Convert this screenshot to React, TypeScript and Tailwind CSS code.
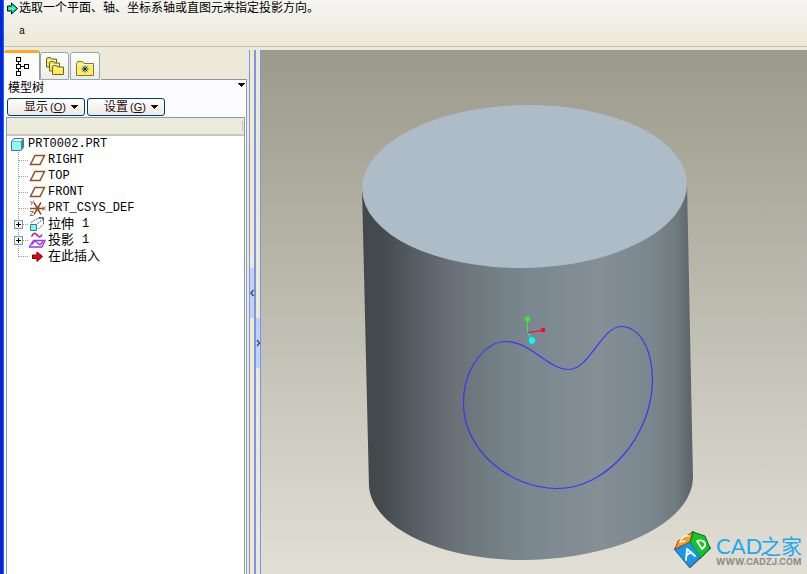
import type { ReactNode } from 'react';

type Kind = 'plane' | 'csys' | 'extrude' | 'project' | 'insert';

const ITEMS: { kind: Kind; name: string; num?: string; expandable?: boolean }[] = [
  { kind: 'plane', name: 'RIGHT' },
  { kind: 'plane', name: 'TOP' },
  { kind: 'plane', name: 'FRONT' },
  { kind: 'csys', name: 'PRT_CSYS_DEF' },
  { kind: 'extrude', name: '拉伸', num: '1', expandable: true },
  { kind: 'project', name: '投影', num: '1', expandable: true },
  { kind: 'insert', name: '在此插入' },
];

const LATIN = "font-['Liberation_Mono','Noto_Sans_CJK_SC',monospace] text-[12px]";
const CJK = "font-['Liberation_Sans','Noto_Sans_CJK_SC',sans-serif] text-[13px]";

export default function App() {
  return (
    <div className="flex min-h-screen flex-col border-l-[3px] border-[#0426d4] bg-[#ece9d8] text-black font-['Liberation_Sans','Noto_Sans_CJK_SC',sans-serif]">
      <div className="flex flex-1 flex-col border-l border-[#1a6af0]">
        <MessageBar />
        <div className="flex flex-1 pt-[3px]">
          <Navigator />
          <Splitter />
          <Viewport />
        </div>
      </div>
    </div>
  );
}

function MessageBar() {
  return (
    <header className="h-[47px] border-b border-[#c5c2b2] bg-linear-to-b from-[#f5f5f2] to-[#ebe8d8] pl-[3px]">
      <div className="flex h-4 items-center">
        <svg className="h-[13px] w-3 shrink-0" viewBox="0 0 12 13">
          <path d="M.5 4h4V1L10.500 6.500 4.500 12V9h-4z" fill="#12e88f" stroke="#000" />
          <path d="M2 6.500h6" stroke="#3ff4f4" strokeWidth="2" />
        </svg>
        <p className="whitespace-nowrap text-[12px] leading-4">选取一个平面、轴、坐标系轴或直图元来指定投影方向。</p>
      </div>
      <p className="mt-2 pl-3 text-[10px] leading-4 font-['Liberation_Mono',monospace]">a</p>
    </header>
  );
}

function Navigator() {
  return (
    <aside className="flex w-[245px] shrink-0 flex-col">
      <div className="mr-[2px] flex h-[30px] items-end" role="tablist">
        <Tab label="模型树" active>
          <svg className="mb-px h-5 w-4" viewBox="0 0 16 20" fill="none" stroke="#000" shapeRendering="crispEdges">
            <path d="M2.500 1.500h4v4h-4zM2.500 8.500h4v4h-4zM2.500 15.500h4v4h-4zM10.500 8.500h4v4h-4z" strokeWidth="1.200" />
            <path d="M4.500 6v2M4.500 13v2M7 10.500h3" />
          </svg>
        </Tab>
        <Tab label="文件夹浏览器">
          <svg className="h-5 w-5" viewBox="0 0 20 20" stroke="#6b6234">
            <path d="M1.500 11V3l1-1.500h3l1 1.500h5v8z" fill="#f2e15c" />
            <path d="M4.500 15V7l1-1.500h3l1 1.500h5v8z" fill="#f6e65c" />
            <path d="M7.500 18.500V11l1-1.500h3l1 1.500h6v7.500z" fill="#ffed45" />
            <path d="M2.500 4.500h8M5.500 8.500h8M8.500 12.500h9" stroke="#fffac0" />
          </svg>
        </Tab>
        <Tab label="收藏夹">
          <svg className="mt-1 h-4 w-[18px]" viewBox="0 0 18 16">
            <path d="M.5 15.500v-12l1-2h5l1.500 2h9.500v12z" fill="#ffed55" stroke="#77765b" />
            <path d="M1.500 4.500h15" stroke="#fffbd0" />
            <path d="M9 5.500v7M5.500 9h7M6.500 6.500l5 5M11.500 6.500l-5 5" stroke="#082e9c" />
          </svg>
        </Tab>
        <div className="h-px flex-1 bg-[#8b9b9c]" />
      </div>

      <div className="mr-[2px] flex flex-1 flex-col border-r border-[#919b9c] bg-[#fcfcfe] pl-[2px] pr-px">
        <div className="flex h-[18px] items-start justify-between pl-[2px]">
          <h1 className="text-[12px] leading-4">模型树</h1>
          <button aria-label="导航器选项" className="mt-[3px] flex">
            <DownArrow />
          </button>
        </div>
        <div className="flex gap-[2px] pl-px">
          <MenuButton text="显示" hotkey="O" />
          <MenuButton text="设置" hotkey="G" />
        </div>
        <Tree />
      </div>
    </aside>
  );
}

function Tab({ label, active, children }: { label: string; active?: boolean; children: ReactNode }) {
  return (
    <button
      role="tab"
      aria-label={label}
      aria-selected={!!active}
      className={
        active
          ? 'flex h-[30px] w-[36px] items-center justify-center rounded-t-[3px] border-t-[3px] border-r border-t-[#fba92d] border-r-[#919b9c] bg-[#fcfcfe]'
          : 'mr-px flex h-[28px] w-[29px] items-center justify-center rounded-t-[3px] border border-[#91a7b4] bg-linear-to-b from-white to-[#ecebe6] last-of-type:w-[30px]'
      }
    >
      {children}
    </button>
  );
}

function MenuButton({ text, hotkey }: { text: string; hotkey: string }) {
  return (
    <button className="flex h-[18px] w-[78px] items-center justify-end rounded-[3px] border border-[#003c74] bg-linear-to-b from-white to-[#eceae2] pr-[6px] text-[12px] text-[#2a0808]">
      <span className="leading-4">{text}</span>
      <span className="ml-[2px] mr-[5px] text-[11px] leading-4">
        (<u>{hotkey}</u>)
      </span>
      <DownArrow />
    </button>
  );
}

function DownArrow() {
  return (
    <svg className="h-1 w-[7px]" viewBox="0 0 7 4" fill="#2a0808" shapeRendering="crispEdges">
      <path d="M0 0h7L3.500 4z" />
    </svg>
  );
}

function Tree() {
  return (
    <div className="mt-px flex flex-1 flex-col border border-b-0 border-[#7f9db9] bg-white">
      <div className="flex h-[18px] justify-end border-b-2 border-[#cbc7b8] bg-[#ebeadb] py-[3px] pr-px">
        <span className="w-px bg-[#c5c2b2]" />
      </div>
      <ul role="tree">
        <li className="flex h-4 items-center pl-1" role="treeitem">
          <svg className="mr-1 h-[13px] w-[13px]" viewBox="0 0 13 13">
            <path d="M.5 3.500 3 .5h9.500v9L10 12.500H.5z" fill="#3a8f90" stroke="#5a7478" />
            <path d="M1 3.500h9v8.500H1z" fill="#8ef7f7" />
            <path d="M1.500 3 3.500 1H12l-2 2z" fill="#d5ffff" />
          </svg>
          <span className={`${LATIN} leading-4`}>PRT0002.PRT</span>
        </li>
        {ITEMS.map((item, i) => (
          <li key={item.name} className="flex h-4 items-center pl-[6px]" role="treeitem">
            <Branch expandable={item.expandable} last={i === ITEMS.length - 1} />
            <ItemIcon kind={item.kind} />
            <span className={`${/^[A-Z]/.test(item.name) ? LATIN : CJK} whitespace-nowrap leading-4`}>{item.name}</span>
            {item.num && <span className={`${LATIN} ml-2 leading-4`}>{item.num}</span>}
          </li>
        ))}
      </ul>
    </div>
  );
}

function Branch({ expandable, last }: { expandable?: boolean; last: boolean }) {
  return (
    <svg className="h-4 w-4 shrink-0" viewBox="0 0 16 16" fill="none" shapeRendering="crispEdges">
      <path d={last ? 'M5.500 0v8.500' : 'M5.500 0v16'} stroke="#9a9a90" strokeDasharray="1 1" />
      <path d="M6 8.500h10" stroke="#9a9a90" strokeDasharray="1 1" />
      {expandable && (
        <>
          <rect x="1.500" y="4.500" width="8" height="8" fill="#f4f3ee" stroke="#7898b5" />
          <path d="M3 8.500h5M5.500 6v5" stroke="#000" />
        </>
      )}
    </svg>
  );
}

function ItemIcon({ kind }: { kind: Kind }) {
  return (
    <svg className="h-4 w-[19px] shrink-0" viewBox="0 0 19 16" fill="none">
      {kind === 'plane' && <path d="M6 3.500h9.500l-4.500 9H1.500z" stroke="#964c20" strokeWidth="1.500" />}
      {kind === 'csys' && (
        <>
          <path d="M1 8.500h14M5 2.500l7 12M12 2.500l-7 12" stroke="#964c20" strokeWidth="1.500" />
          <circle cx="8.500" cy="8.500" r="2" fill="#964c20" />
          <path d="M1 1l2 2M5 .5 2 5M13.500 6.500l3 4M16.500 6.500l-3 4M1 11.500h3.500l-3.500 4h3.500" stroke="#777" />
        </>
      )}
      {kind === 'extrude' && (
        <>
          <path d="M2 6.500 8.500 2.500h6V8L9.500 13" stroke="#555" strokeDasharray="2 1" />
          <path d="M8.500 7.500l6-5" stroke="#555" strokeDasharray="2 1" />
          <path d="M9.500 1.500h5v5" stroke="#397d83" />
          <path d="M1.500 8.500h6v6h-6z" fill="#80f5f5" stroke="#397d83" />
        </>
      )}
      {kind === 'project' && (
        <>
          <path d="M2.500 4.500c3-5 4-3 6-1s3 2 4.500-1" stroke="#a31b83" strokeWidth="1.500" />
          <path d="M4.500 8.500H16l-3 6.500H.5z" stroke="#9b30ff" strokeWidth="1.300" />
          <path d="M3 12.500c3-5 4-3 6-1s3 1 5-2" stroke="#9b30ff" strokeWidth="1.400" />
        </>
      )}
      {kind === 'insert' && <path d="M3.500 7h4.500V4l5.500 4.500-5.500 5V10.500H3.500z" fill="#f00018" stroke="#6d0000" />}
    </svg>
  );
}

function Splitter() {
  return (
    <div className="flex w-3 shrink-0 border-r border-[#7b96df]">
      <div className="flex w-[5px] flex-col border-l border-[#7b96df]">
        <div className="h-[218px]" />
        <Handle label="收起" d="M3.500 0 1 3l2.500 3" />
      </div>
      <div className="flex flex-1 flex-col border-l-2 border-[#7b96df]">
        <div className="h-[268px]" />
        <Handle label="展开" d="M1 0l2.500 3L1 6" />
      </div>
    </div>
  );
}

function Handle({ label, d }: { label: string; d: string }) {
  return (
    <button aria-label={label} className="flex h-[50px] items-center justify-center bg-[#c1d1fc]">
      <svg className="h-[6px] w-1 overflow-visible" viewBox="0 0 4 6" fill="none" stroke="#3b4f78" strokeWidth="1.500">
        <path d={d} />
      </svg>
    </button>
  );
}

function Viewport() {
  return (
    <main className="flex flex-1 bg-linear-to-b from-[#9c998d] to-[#e2dfd4]">
      <svg className="w-full" viewBox="261 50 546 524" fill="none" role="img" aria-label="PRT0002">
        <defs>
          <linearGradient id="side" gradientUnits="userSpaceOnUse" x1="363" y1="0" x2="692" y2="0">
            <stop offset="0" stopColor="#42484b" />
            <stop offset="0.060" stopColor="#444a4c" />
            <stop offset="0.140" stopColor="#535a61" />
            <stop offset="0.280" stopColor="#6b7178" />
            <stop offset="0.390" stopColor="#717e82" />
            <stop offset="0.500" stopColor="#7b878f" />
            <stop offset="0.720" stopColor="#848f96" />
            <stop offset="0.880" stopColor="#7a868d" />
            <stop offset="0.950" stopColor="#707b7f" />
            <stop offset="1" stopColor="#5c636b" />
          </linearGradient>
        </defs>

        <path d="M362 188 369 487C373 530 445 561 527 560 617 558 691 524 693 478L687 184z" fill="url(#side)" />
        <ellipse cx="524.500" cy="186.500" rx="162.500" ry="81.500" transform="rotate(-1 524.500 186.500)" fill="#aebcc7" />

        <path
          d="M463.500 404C463 369 485 341.500 506 341.500C531 341.500 548 369.500 569 369.500C589 369.500 602 326.500 621 326.500C640 326.500 652.500 350 652.500 380C652 436 607 488.500 557 488.500C510 488.500 463.500 450 463.500 404z"
          stroke="#3c35f4"
          strokeWidth="1.200"
        />

        <path d="M527.500 320v12" stroke="#35ee2c" shapeRendering="crispEdges" />
        <path d="M528 332.500l14-2" stroke="#ff0033" />
        <path d="M528 333l4 7" stroke="#00ffff" />
        <circle cx="527.500" cy="319" r="2.700" fill="#35ee2c" />
        <circle cx="543" cy="330" r="2.300" fill="#ff0033" />
        <circle cx="532" cy="340.500" r="3.200" fill="#00ffff" />

        <Watermark />
      </svg>
    </main>
  );
}

function Watermark() {
  return (
    <g>
      <g strokeLinejoin="round">
        <path d="M675 549l18-17 17 16-20 19z" fill="#555" stroke="#555" strokeWidth="2" />
        <path d="M675 549l3-8 15-9-3 10z" fill="#ff9a10" stroke="#bd3c12" />
        <path d="M693 532l12 4 5 12-10 11-10-17z" fill="#12c425" stroke="#176c1b" />
        <path d="M675 550l15-8 10 15-10 10z" fill="#1b97e6" stroke="#1b78c0" />
      </g>
      <g stroke="#fff" strokeWidth="1.800" strokeLinecap="round" strokeLinejoin="round">
        <path d="M686 560l1-11 8 7M687 555l4-3" />
        <path d="M697 541l5 8 3-3c1-4-3-7-8-5z" />
        <path d="M689 536c-4-1-9 3-9 6l5-1" strokeWidth="1.500" />
      </g>
      <text x="716" y="554" fill="#22a7f2" className="text-[22px] font-['Lato',sans-serif]">
        CAD
      </text>
      <text x="760" y="554" fill="#22a7f2" className="text-[21px] font-['Liberation_Sans','Noto_Sans_CJK_SC',sans-serif]">
        之家
      </text>
      <text x="716" y="565" fill="#8d8d89" className="text-[9px] font-bold font-['Inter',sans-serif]">
        WWW.CADZJ.COM
      </text>
    </g>
  );
}
